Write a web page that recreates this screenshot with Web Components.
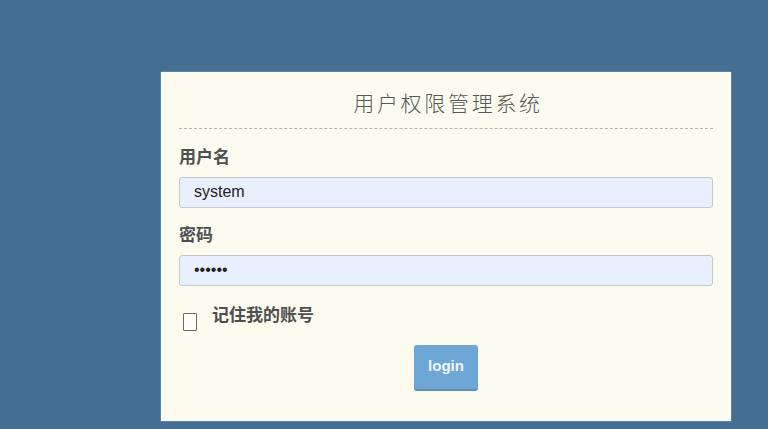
<!DOCTYPE html>
<html lang="zh">
<head>
<meta charset="utf-8">
<title>用户权限管理系统</title>
<style>
  html, body {
    background: #436f92;
    height: 100%;
    margin: 0;
    overflow: hidden;
  }

  body {
    font-family: "Liberation Sans", "Noto Sans CJK SC", sans-serif;
  }
</style>
</head>
<body>
<login-page>
  <login-field label="用户名" value="system"></login-field>
  <login-field label="密码" type="password" value="123456"></login-field>
  <login-remember>记住我的账号</login-remember>
  <login-button>login</login-button>
</login-page>

<script>
class LoginPage extends HTMLElement {
  constructor() {
    super();
    const template = document.createElement( 'template' );
    template.innerHTML = `
      <style>
        :host {
          box-sizing: border-box;
          display: block;
          padding: 72px 0 0 161px;
        }

        div {
          background: #fcfbef;
          box-shadow: 0 0 1px #e8eef0;
          box-sizing: border-box;
          display: flex;
          flex-direction: column;
          height: 349px;
          padding: 0 18px;
          width: 570px;
        }

        h1 {
          border-bottom: 1px dashed #b5b5ab;
          color: #55595a;
          font-family: "Noto Sans CJK SC", sans-serif;
          font-size: 21px;
          font-weight: 300;
          height: 56px;
          letter-spacing: 2.7px;
          line-height: 60px;
          margin: 0 0 18px 0;
          padding-left: 4px;
          text-align: center;
        }
      </style>
      <div>
        <h1>用户权限管理系统</h1>
        <slot></slot>
      </div>
    `;
    this.attachShadow( {mode: 'open'} );
    this.shadowRoot.appendChild( template.content.cloneNode( true ) );
  }
}

class LoginField extends HTMLElement {
  constructor() {
    super();
    const template = document.createElement( 'template' );
    template.innerHTML = `
      <style>
        :host {
          display: block;
          margin: 0 0 17px 0;
        }

        label {
          color: #4f4f4f;
          display: block;
          font-family: "Liberation Sans", "Noto Sans CJK SC", sans-serif;
          font-size: 17px;
          font-weight: 700;
          line-height: 22px;
          margin: 0 0 8px 0;
        }

        input {
          background: #e8f0fe;
          border: 1px solid #c4c7cb;
          border-radius: 3px;
          box-sizing: border-box;
          color: #222222;
          display: block;
          font-family: "Liberation Sans", sans-serif;
          font-size: 16px;
          height: 31px;
          margin: 0;
          outline: none;
          padding: 0 14px 2px 14px;
          width: 100%;
        }
      </style>
      <label></label>
      <input>
    `;
    this.attachShadow( {mode: 'open'} );
    this.shadowRoot.appendChild( template.content.cloneNode( true ) );

    this.$label = this.shadowRoot.querySelector( 'label' );
    this.$input = this.shadowRoot.querySelector( 'input' );
  }

  connectedCallback() {
    this.$label.textContent = this.getAttribute( 'label' );
    this.$input.type = this.getAttribute( 'type' ) || 'text';
    this.$input.value = this.getAttribute( 'value' );
  }
}

class LoginRemember extends HTMLElement {
  constructor() {
    super();
    const template = document.createElement( 'template' );
    template.innerHTML = `
      <style>
        :host {
          align-items: flex-start;
          box-sizing: border-box;
          color: #4f4f4f;
          display: flex;
          font-size: 17px;
          font-weight: 700;
          height: 42px;
          line-height: 22px;
          padding: 2px 0 0 4px;
        }

        input {
          appearance: none;
          background: #fefef8;
          border: 1px solid #6b6b66;
          border-radius: 1px;
          box-sizing: border-box;
          flex: none;
          height: 18px;
          margin: 8px 15px 0 0;
          width: 14px;
        }
      </style>
      <input type="checkbox">
      <slot></slot>
    `;
    this.attachShadow( {mode: 'open'} );
    this.shadowRoot.appendChild( template.content.cloneNode( true ) );
  }
}

class LoginButton extends HTMLElement {
  constructor() {
    super();
    const template = document.createElement( 'template' );
    template.innerHTML = `
      <style>
        :host {
          display: flex;
          justify-content: center;
        }

        button {
          background: #6ea6d6;
          border: none;
          border-bottom: 2px solid #5f8db5;
          border-radius: 3px;
          box-sizing: border-box;
          color: #eef5fa;
          font-family: "Liberation Sans", sans-serif;
          font-size: 15px;
          font-weight: 700;
          height: 46px;
          margin: 0;
          padding: 0 0 4px 0;
          width: 64px;
        }
      </style>
      <button type="button"><slot></slot></button>
    `;
    this.attachShadow( {mode: 'open'} );
    this.shadowRoot.appendChild( template.content.cloneNode( true ) );
  }
}

window.customElements.define( 'login-page', LoginPage );
window.customElements.define( 'login-field', LoginField );
window.customElements.define( 'login-remember', LoginRemember );
window.customElements.define( 'login-button', LoginButton );
</script>
</body>
</html>
